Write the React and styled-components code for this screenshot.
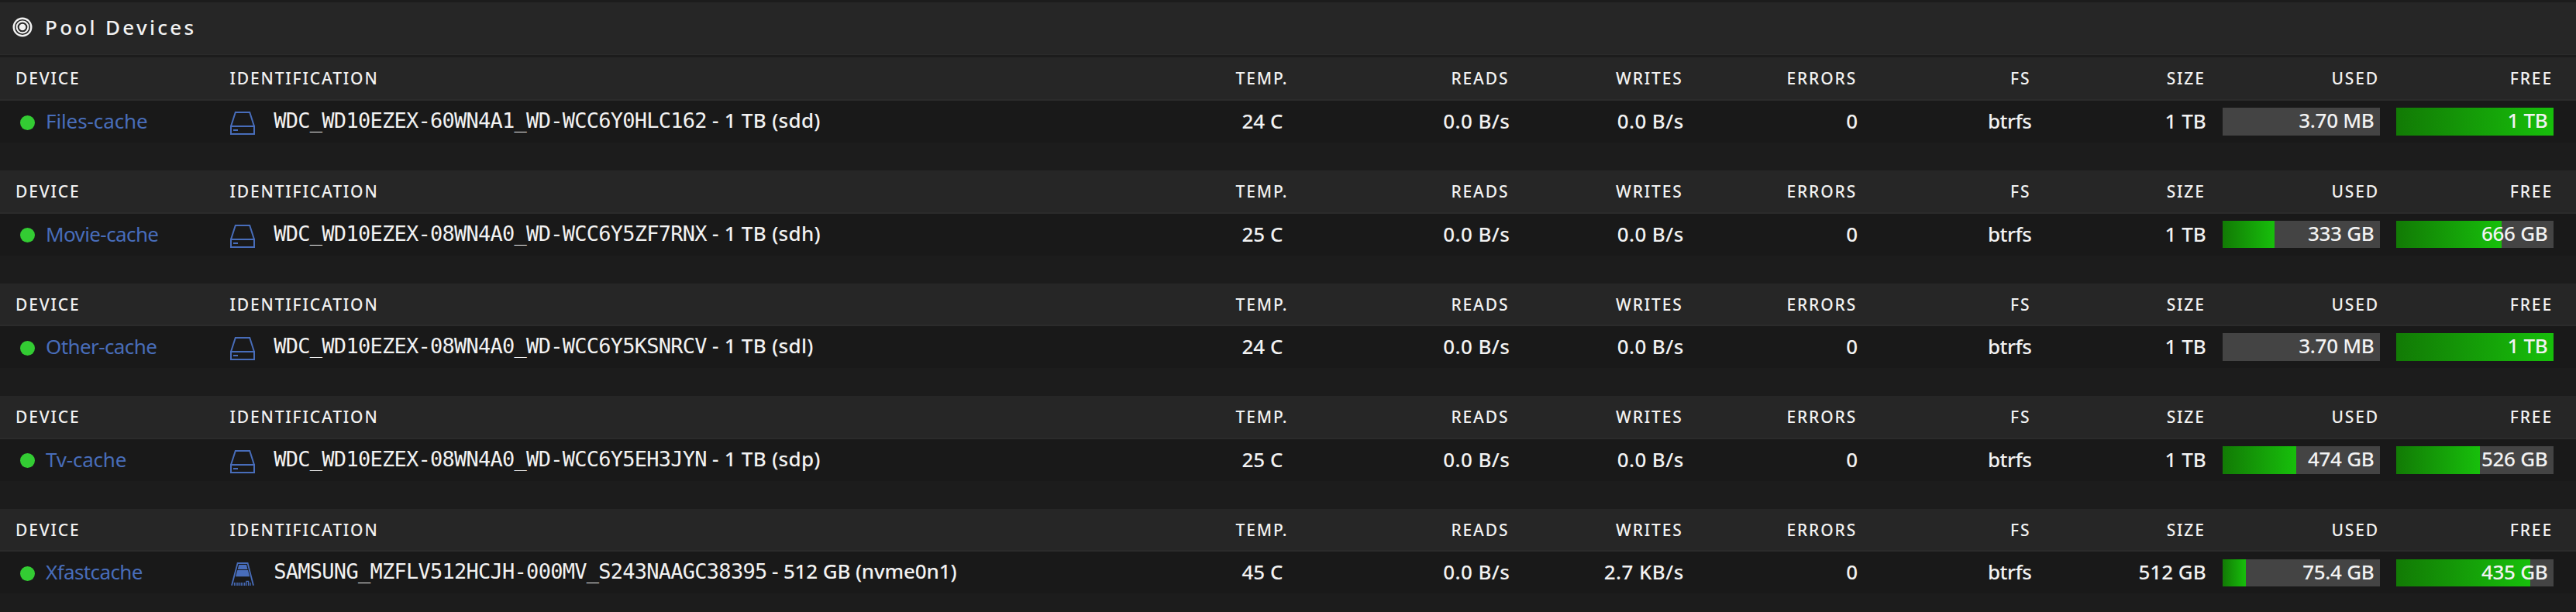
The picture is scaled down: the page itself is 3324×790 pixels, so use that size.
import React from "react";
import styled, { createGlobalStyle } from "styled-components";

const GlobalStyle = createGlobalStyle`
  * {
    box-sizing: border-box;
  }
  body {
    margin: 0;
    background: #1c1c1c;
    color: #f2f2f2;
    font-family: "Noto Sans", "Open Sans", sans-serif;
    font-size: 26px;
  }
`;

const Page = styled.div`
  min-height: 790px;
  padding-top: 3px;
  overflow: hidden;
`;

const TitleBar = styled.div`
  display: flex;
  align-items: flex-start;
  height: 68px;
  padding-left: 16px;
  background: #262626;
  border-bottom: 1px solid #2b2b2b;
  font-weight: 500;
  line-height: 65px;
  letter-spacing: 3.3px;

  svg {
    margin: 19px 16px 0 0;
  }
`;

const Pools = styled.div`
  display: flex;
  flex-direction: column;
  gap: 36px;
  margin-top: 3.4px;
`;

const Columns = styled.div`
  display: grid;
  grid-template-columns: 276.5px 1220.5px 224px 207.3px 224.4px 224.4px 224.3px 225.4px 224.2px 224px;
  padding-left: 20px;
  white-space: nowrap;
`;

const Cell = styled.div`
  text-align: ${(props) => props.$align || "right"};
  letter-spacing: ${(props) => props.$spacing};
`;

const HeadRow = styled(Columns)`
  height: 55.6px;
  background: #262626;
  border-bottom: 2px solid #2b2b2b;
  font-size: 21px;
  font-weight: 500;
  line-height: 54.6px;
  letter-spacing: 1.85px;
  text-transform: uppercase;

  ${Cell} {
    padding-right: 1px;
  }
`;

const BodyRow = styled(Columns)`
  height: 54px;
  background: #191919;
  font-weight: 500;
  line-height: 52.6px;
`;

const DeviceCell = styled.div`
  display: flex;
  padding-left: 6px;
`;

const Status = styled.span`
  width: 19px;
  height: 19px;
  margin: 18.6px 14px 0 0;
  border-radius: 50%;
  background: #33cc33;
`;

const DeviceLink = styled.a`
  color: #486dba;
  font-weight: 400;
  text-decoration: none;
  letter-spacing: ${(props) => props.$spacing};
`;

const IdentCell = styled.div`
  display: flex;
  line-height: 50.6px;

  svg {
    margin: 14px 24.3px 0 0.5px;
  }
`;

const Serial = styled.span`
  font-family: "DejaVu Sans Mono", monospace;
  font-size: 27px;
  font-weight: 400;
  line-height: 0;
  letter-spacing: -0.74px;
`;

const Extra = styled.span`
  letter-spacing: ${(props) => props.$spacing};
`;

const UsageBar = styled.div`
  display: grid;
  height: 35.5px;
  margin: 9.3px 0 0 21.2px;
  background: #444444;

  > * {
    grid-area: 1 / 1;
  }
`;

const Fill = styled.div`
  background: linear-gradient(90deg, #127a05 0, #17bf0b);
`;

const Amount = styled.span`
  padding-right: 7.5px;
  line-height: 32px;
  letter-spacing: -0.3px;
  text-align: right;
`;

const PoolIcon = () => (
  <svg width="26" height="26" viewBox="0 0 26 26" fill="none" stroke="#f2f2f2">
    <circle cx="13" cy="13" r="11.3" strokeWidth="2.4" />
    <circle cx="13" cy="13" r="7.4" strokeWidth="2.1" />
    <circle cx="13" cy="13" r="4.3" fill="#f2f2f2" stroke="none" />
  </svg>
);

const DiskIcon = () => (
  <svg width="32" height="30" viewBox="0 0 32 30" fill="none" stroke="#486dba" strokeWidth="2">
    <path d="M1 19 6.8 1h18.4L31 19" />
    <path d="M1 19h30v10H1z" />
    <path d="M4 24h6" />
  </svg>
);

const NvmeIcon = () => (
  <svg width="32" height="30" viewBox="0 0 32 30" fill="#486dba">
    <path d="M2 29.8 9.6 1h13L30 29.8" fill="none" stroke="#486dba" strokeWidth="1.8" />
    <path d="M11.2 3h9.8l1.5 6H9.7z" />
    <path d="M9.3 10h13.8l2 8.2H7z" />
    <path
      d="M5.5 26v4M7.7 26v4M9.9 26v4M12.1 26v4M14.3 26v4M16.5 26v4M18.7 26v4M21 30v-5.6h2.6V30M26 26v4"
      fill="none"
      stroke="#486dba"
      strokeWidth="1.3"
    />
  </svg>
);

const pools = [
  { name: "Files-cache", nameSpacing: "-0.1px", serial: "WDC_WD10EZEX-60WN4A1_WD-WCC6Y0HLC162", dev: "sdd", temp: 24, size: "1 TB", used: "3.70 MB", usedPct: 0, free: "1 TB", freePct: 100 },
  { name: "Movie-cache", nameSpacing: "-0.6px", serial: "WDC_WD10EZEX-08WN4A0_WD-WCC6Y5ZF7RNX", dev: "sdh", temp: 25, size: "1 TB", used: "333 GB", usedPct: 33, free: "666 GB", freePct: 67 },
  { name: "Other-cache", nameSpacing: "-0.6px", serial: "WDC_WD10EZEX-08WN4A0_WD-WCC6Y5KSNRCV", dev: "sdl", temp: 24, size: "1 TB", used: "3.70 MB", usedPct: 0, free: "1 TB", freePct: 100 },
  { name: "Tv-cache", nameSpacing: "-0.2px", serial: "WDC_WD10EZEX-08WN4A0_WD-WCC6Y5EH3JYN", dev: "sdp", temp: 25, size: "1 TB", used: "474 GB", usedPct: 47, free: "526 GB", freePct: 53 },
  { name: "Xfastcache", nameSpacing: "-0.6px", serial: "SAMSUNG_MZFLV512HCJH-000MV_S243NAAGC38395", dev: "nvme0n1", nvme: true, temp: 45, writes: "2.7 KB/s", size: "512 GB", used: "75.4 GB", usedPct: 15, free: "435 GB", freePct: 85 },
];

const Usage = ({ percent, children }) => (
  <UsageBar>
    <Fill style={{ width: `${percent}%` }} />
    <Amount>{children}</Amount>
  </UsageBar>
);

const Pool = ({ pool }) => (
  <div>
    <HeadRow>
      <Cell $align="left">Device</Cell>
      <Cell $align="left">Identification</Cell>
      <Cell $align="center">Temp.</Cell>
      <Cell>Reads</Cell>
      <Cell>Writes</Cell>
      <Cell>Errors</Cell>
      <Cell>FS</Cell>
      <Cell>Size</Cell>
      <Cell>Used</Cell>
      <Cell>Free</Cell>
    </HeadRow>
    <BodyRow>
      <DeviceCell>
        <Status />
        <DeviceLink $spacing={pool.nameSpacing}>{pool.name}</DeviceLink>
      </DeviceCell>
      <IdentCell>
        {pool.nvme ? <NvmeIcon /> : <DiskIcon />}
        <div>
          <Serial>{pool.serial}</Serial>
          <Extra $spacing={pool.nvme ? "-0.15px" : "0.3px"}>
            {" "}- {pool.size} ({pool.dev})
          </Extra>
        </div>
      </IdentCell>
      <Cell $align="center">{pool.temp} C</Cell>
      <Cell $spacing="0.4px">0.0 B/s</Cell>
      <Cell $spacing="0.4px">{pool.writes || "0.0 B/s"}</Cell>
      <Cell>0</Cell>
      <Cell $spacing="-0.5px">btrfs</Cell>
      <Cell>{pool.size}</Cell>
      <Usage percent={pool.usedPct}>{pool.used}</Usage>
      <Usage percent={pool.freePct}>{pool.free}</Usage>
    </BodyRow>
  </div>
);

export default function App() {
  return (
    <>
      <GlobalStyle />
      <Page>
        <TitleBar>
          <PoolIcon />
          Pool Devices
        </TitleBar>
        <Pools>
          {pools.map((pool) => (
            <Pool key={pool.name} pool={pool} />
          ))}
        </Pools>
      </Page>
    </>
  );
}
